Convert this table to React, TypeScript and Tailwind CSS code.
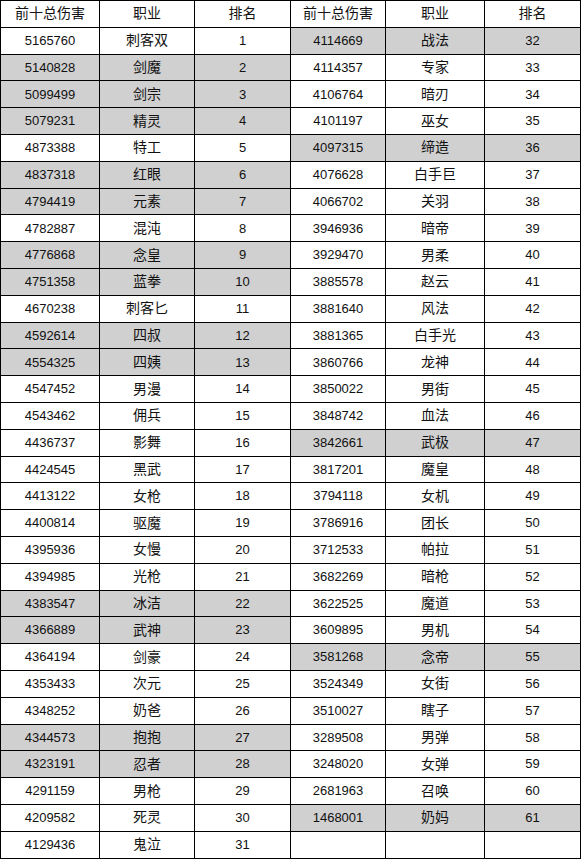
import React from 'react'

type Row = [string, string, string, boolean]

const left: Row[] = [
	['5165760', '刺客双', '1', false],
	['5140828', '剑魔', '2', true],
	['5099499', '剑宗', '3', true],
	['5079231', '精灵', '4', true],
	['4873388', '特工', '5', false],
	['4837318', '红眼', '6', true],
	['4794419', '元素', '7', true],
	['4782887', '混沌', '8', false],
	['4776868', '念皇', '9', true],
	['4751358', '蓝拳', '10', true],
	['4670238', '刺客匕', '11', false],
	['4592614', '四叔', '12', true],
	['4554325', '四姨', '13', true],
	['4547452', '男漫', '14', false],
	['4543462', '佣兵', '15', false],
	['4436737', '影舞', '16', false],
	['4424545', '黑武', '17', false],
	['4413122', '女枪', '18', false],
	['4400814', '驱魔', '19', false],
	['4395936', '女慢', '20', false],
	['4394985', '光枪', '21', false],
	['4383547', '冰洁', '22', true],
	['4366889', '武神', '23', true],
	['4364194', '剑豪', '24', false],
	['4353433', '次元', '25', false],
	['4348252', '奶爸', '26', false],
	['4344573', '抱抱', '27', true],
	['4323191', '忍者', '28', true],
	['4291159', '男枪', '29', false],
	['4209582', '死灵', '30', false],
	['4129436', '鬼泣', '31', false],
]

const right: Row[] = [
	['4114669', '战法', '32', true],
	['4114357', '专家', '33', false],
	['4106764', '暗刃', '34', false],
	['4101197', '巫女', '35', false],
	['4097315', '缔造', '36', true],
	['4076628', '白手巨', '37', false],
	['4066702', '关羽', '38', false],
	['3946936', '暗帝', '39', false],
	['3929470', '男柔', '40', false],
	['3885578', '赵云', '41', false],
	['3881640', '风法', '42', false],
	['3881365', '白手光', '43', false],
	['3860766', '龙神', '44', false],
	['3850022', '男街', '45', false],
	['3848742', '血法', '46', false],
	['3842661', '武极', '47', true],
	['3817201', '魔皇', '48', false],
	['3794118', '女机', '49', false],
	['3786916', '团长', '50', false],
	['3712533', '帕拉', '51', false],
	['3682269', '暗枪', '52', false],
	['3622525', '魔道', '53', false],
	['3609895', '男机', '54', false],
	['3581268', '念帝', '55', true],
	['3524349', '女街', '56', false],
	['3510027', '瞎子', '57', false],
	['3289508', '男弹', '58', false],
	['3248020', '女弹', '59', false],
	['2681963', '召唤', '60', false],
	['1468001', '奶妈', '61', true],
	['', '', '', false],
]

const header = ['前十总伤害', '职业', '排名']

const Cell = ({ text, gray, cjk }: { text: string; gray: boolean; cjk: boolean }) => (
	<div
		className={`h-[26.8px] flex items-center justify-center border-r border-b border-black text-[#111] ${
			gray ? 'bg-[#d0d0d0]' : 'bg-white'
		} ${cjk ? 'text-[14px]' : 'text-[13px]'}`}
	>
		{text}
	</div>
)

export default function App() {
	return (
		<div className="w-[581px] h-[861px] bg-white">
			<div
				className="grid grid-cols-[99px_95px_96px_95px_99px_96px] border-l border-t border-black w-[581px]"
				style={{ fontFamily: '"Liberation Sans", "Noto Sans CJK SC", sans-serif' }}
			>
				{[...header, ...header].map((h, i) => (
					<Cell key={'h' + i} text={h} gray={false} cjk />
				))}
				{left.map((l, i) => {
					const r = right[i]
					return (
						<React.Fragment key={i}>
							<Cell text={l[0]} gray={l[3]} cjk={false} />
							<Cell text={l[1]} gray={l[3]} cjk />
							<Cell text={l[2]} gray={l[3]} cjk={false} />
							<Cell text={r[0]} gray={r[3]} cjk={false} />
							<Cell text={r[1]} gray={r[3]} cjk />
							<Cell text={r[2]} gray={r[3]} cjk={false} />
						</React.Fragment>
					)
				})}
			</div>
		</div>
	)
}
